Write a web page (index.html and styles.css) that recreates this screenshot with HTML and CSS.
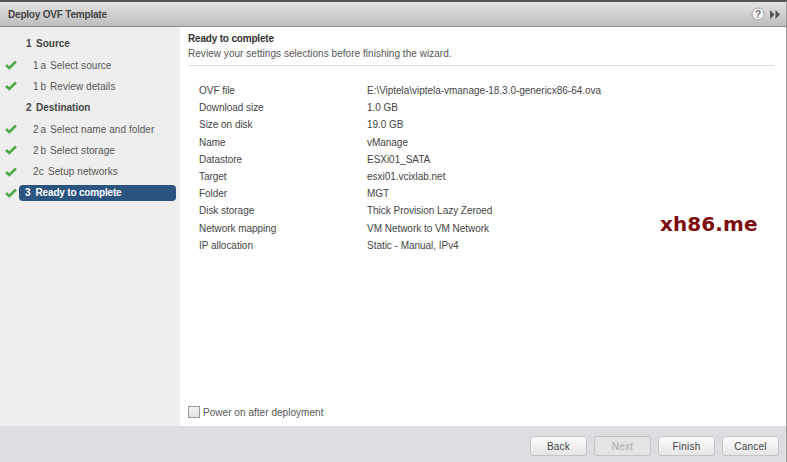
FILE: index.html
```html
<!DOCTYPE html>
<html lang="en">
<head>
<meta charset="utf-8">
<title>Deploy OVF Template</title>
<link rel="stylesheet" href="styles.css">
</head>
<body>
<div class="dialog">
  <header class="titlebar">
    <span class="title">Deploy OVF Template</span>
    <span class="tools">
      <svg class="help" width="14" height="14" viewBox="0 0 14 14"><circle cx="7" cy="7" r="6" fill="#f2f2f2" stroke="#a5a5a5"/><text x="7" y="10.5" text-anchor="middle" class="help-q">?</text></svg>
      <svg class="arrows" width="10" height="9" viewBox="0 0 10 9"><path d="M0 0l4.5 4.5L0 9zM5.5 0L10 4.5 5.5 9z" fill="#555"/></svg>
    </span>
  </header>
  <div class="main">
    <nav class="steps">
      <div class="step head"><span class="tick"></span><span class="num">1</span>Source</div>
      <div class="step sub"><svg class="tick" width="12" height="10" viewBox="0 0 12 10"><path d="M1 5l3.2 3L11 1.5" fill="none" stroke="#4fa94b" stroke-width="2.6"/></svg><span class="num">1 a</span>Select source</div>
      <div class="step sub"><svg class="tick" width="12" height="10" viewBox="0 0 12 10"><path d="M1 5l3.2 3L11 1.5" fill="none" stroke="#4fa94b" stroke-width="2.6"/></svg><span class="num">1 b</span>Review details</div>
      <div class="step head"><span class="tick"></span><span class="num">2</span>Destination</div>
      <div class="step sub"><svg class="tick" width="12" height="10" viewBox="0 0 12 10"><path d="M1 5l3.2 3L11 1.5" fill="none" stroke="#4fa94b" stroke-width="2.6"/></svg><span class="num">2 a</span>Select name and folder</div>
      <div class="step sub"><svg class="tick" width="12" height="10" viewBox="0 0 12 10"><path d="M1 5l3.2 3L11 1.5" fill="none" stroke="#4fa94b" stroke-width="2.6"/></svg><span class="num">2 b</span>Select storage</div>
      <div class="step sub"><svg class="tick" width="12" height="10" viewBox="0 0 12 10"><path d="M1 5l3.2 3L11 1.5" fill="none" stroke="#4fa94b" stroke-width="2.6"/></svg><span class="num narrow">2c</span>Setup networks</div>
      <div class="step current"><svg class="tick" width="12" height="10" viewBox="0 0 12 10"><path d="M1 5l3.2 3L11 1.5" fill="none" stroke="#4fa94b" stroke-width="2.6"/></svg><span class="pill">3&nbsp; Ready to complete</span></div>
    </nav>
    <section class="content">
      <div class="page-head">
        <h1>Ready to complete</h1>
        <p>Review your settings selections before finishing the wizard.</p>
      </div>
      <dl class="summary">
        <dt>OVF file</dt><dd>E:\Viptela\viptela-vmanage-18.3.0-genericx86-64.ova</dd>
        <dt>Download size</dt><dd>1.0 GB</dd>
        <dt>Size on disk</dt><dd>19.0 GB</dd>
        <dt>Name</dt><dd>vManage</dd>
        <dt>Datastore</dt><dd>ESXi01_SATA</dd>
        <dt>Target</dt><dd>esxi01.vcixlab.net</dd>
        <dt>Folder</dt><dd>MGT</dd>
        <dt>Disk storage</dt><dd>Thick Provision Lazy Zeroed</dd>
        <dt>Network mapping</dt><dd>VM Network to VM Network</dd>
        <dt>IP allocation</dt><dd>Static - Manual, IPv4</dd>
      </dl>
      <label class="power"><span class="box"></span>Power on after deployment</label>
      <span class="watermark">xh86.me</span>
    </section>
  </div>
  <footer class="actions">
    <button>Back</button>
    <button class="off">Next</button>
    <button>Finish</button>
    <button>Cancel</button>
  </footer>
</div>
</body>
</html>
```
FILE: styles.css
```css
* { box-sizing: border-box; }
html, body { margin: 0; height: 100%; background: #fff; overflow: hidden; }
body { font: 10px/17px "Liberation Sans", Arial, sans-serif; color: #444; }
.dialog { width: 787px; height: 462px; display: flex; flex-direction: column; border-top: 2px solid #555; border-right: 1px solid #999; }
.titlebar { height: 25px; flex: none; display: flex; align-items: center; justify-content: space-between; padding: 0 6px 0 8px; background: linear-gradient(#e4e4e4, #bdbdbd); border-bottom: 1px solid #8c8c8c; }
.title { font-weight: bold; font-size: 10px; letter-spacing: -.2px; color: #444; }
.tools { display: flex; align-items: center; gap: 5px; }
.help-q { font: bold 10px "Liberation Sans", sans-serif; fill: #777; }
.main { flex: 1; display: flex; min-height: 0; }
.steps { width: 180px; flex: none; background: #eeeeee; padding-top: 6px; }
.step { height: 21.35px; display: flex; align-items: center; font-size: 10px; letter-spacing: .07px; color: #555; }
.tick { width: 12px; height: 10px; margin-left: 5px; flex: none; }
.head { font-weight: bold; color: #444; letter-spacing: 0; }
.head .num { margin-left: 9px; width: 10px; }
.sub .num { margin-left: 16px; width: 17px; word-spacing: -1px; }
.sub .num.narrow { width: 15px; }
.current { color: #fff; font-weight: bold; }
.pill { margin-left: 2px; width: 157px; height: 16px; line-height: 16px; padding-left: 6px; background: #2b5480; border-radius: 4px; letter-spacing: -.18px; }
.content { flex: 1; position: relative; display: flex; flex-direction: column; background: #fff; padding: 5px 12px 7px 8px; }
.page-head { border-bottom: 1px solid #ddd; padding-bottom: 6px; height: 34px; flex: none; }
h1 { margin: 0; font-size: 10px; line-height: 13px; font-weight: bold; letter-spacing: -.18px; color: #333; }
.page-head p { margin: 2px 0 0; line-height: 13px; letter-spacing: .04px; color: #555; }
.summary { margin: 16px 0 0 11px; display: grid; grid-template-columns: 168px 1fr; grid-auto-rows: 17.2px; letter-spacing: -.03px; }
.summary dt, .summary dd { margin: 0; }
.power { margin-top: auto; display: flex; align-items: center; gap: 3px; height: 14px; letter-spacing: .04px; color: #555; }
.box { width: 12px; height: 12px; border: 1px solid #999; background: linear-gradient(#f4f4f4, #e2e2e2); }
.watermark { position: absolute; left: 480px; top: 185px; font: bold 20px/24px "DejaVu Sans", sans-serif; color: #7d0c0c; letter-spacing: .1px; }
.actions { height: 36px; flex: none; display: flex; justify-content: flex-end; gap: 7px; padding: 10px 7px 0 0; background: #dcdee2; }
button { width: 57px; height: 20px; padding: 0; font: 10px "Liberation Sans", sans-serif; letter-spacing: .2px; color: #444; border: 1px solid #c4c4c4; border-radius: 3px; background: linear-gradient(#fbfbfb, #e6e6e6); }
button.off { color: #aaa; background: #e4e4e4; }
```
